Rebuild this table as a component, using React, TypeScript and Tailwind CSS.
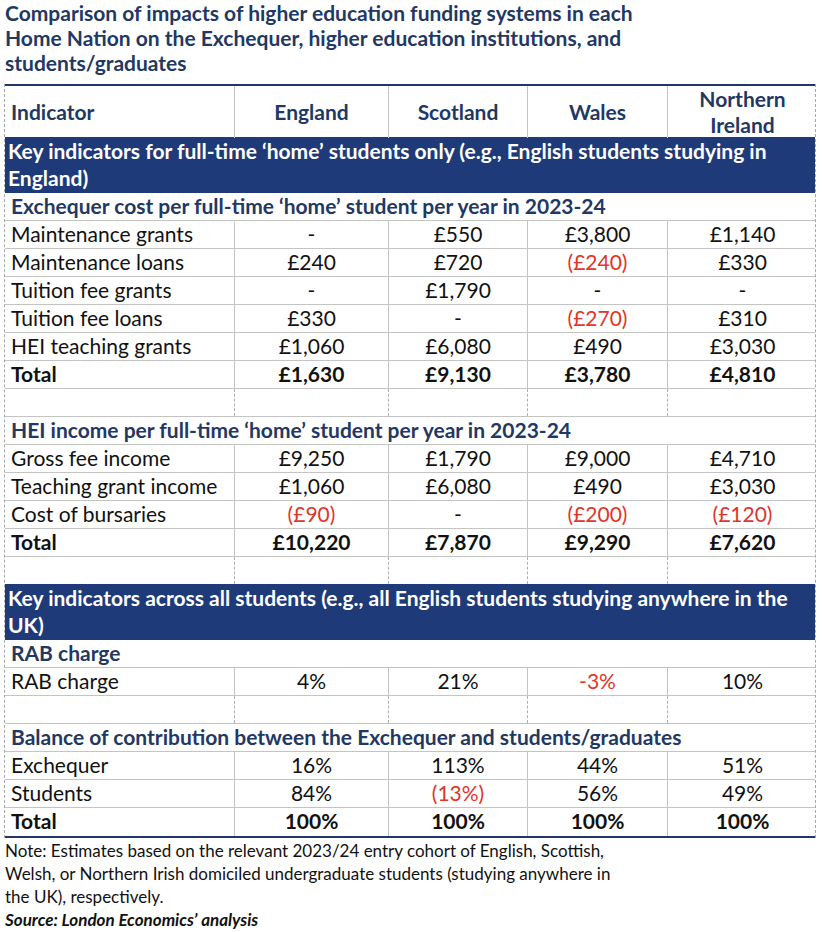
import React from "react";

type Row = { label: string; vals: string[]; bold?: boolean; red?: number[] };

const exchequer: Row[] = [
  { label: "Maintenance grants", vals: ["-", "£550", "£3,800", "£1,140"] },
  { label: "Maintenance loans", vals: ["£240", "£720", "(£240)", "£330"], red: [2] },
  { label: "Tuition fee grants", vals: ["-", "£1,790", "-", "-"] },
  { label: "Tuition fee loans", vals: ["£330", "-", "(£270)", "£310"], red: [2] },
  { label: "HEI teaching grants", vals: ["£1,060", "£6,080", "£490", "£3,030"] },
  { label: "Total", vals: ["£1,630", "£9,130", "£3,780", "£4,810"], bold: true },
];

const income: Row[] = [
  { label: "Gross fee income", vals: ["£9,250", "£1,790", "£9,000", "£4,710"] },
  { label: "Teaching grant income", vals: ["£1,060", "£6,080", "£490", "£3,030"] },
  { label: "Cost of bursaries", vals: ["(£90)", "-", "(£200)", "(£120)"], red: [0, 2, 3] },
  { label: "Total", vals: ["£10,220", "£7,870", "£9,290", "£7,620"], bold: true },
];

const balance: Row[] = [
  { label: "Exchequer", vals: ["16%", "113%", "44%", "51%"] },
  { label: "Students", vals: ["84%", "(13%)", "56%", "49%"], red: [1] },
];

const grid = "grid grid-cols-[229px_154px_139px_140px_150px]";

function DataRow({ row, last }: { row: Row; last?: boolean }) {
  return (
    <div className={`${grid} h-[28px] leading-[26px] ${last ? "" : "border-b border-[#c4c4c4]"}`}>
      <div className={`pl-[6px] whitespace-nowrap ${row.bold ? "font-bold" : ""}`}>{row.label}</div>
      {row.vals.map((v, i) => (
        <div
          key={i}
          className={`border-l border-[#c4c4c4] text-center ${row.bold ? "font-bold" : ""} ${
            row.red?.includes(i) ? "text-[#e0352b]" : ""
          }`}
        >
          {v}
        </div>
      ))}
    </div>
  );
}

function EmptyRow({ noLine }: { noLine?: boolean }) {
  return (
    <div className={`${grid} ${noLine ? "h-[27px]" : "h-[28px] border-b border-[#c4c4c4]"}`}>
      <div />
      <div className="border-l border-dashed border-[#b0b0b0]" />
      <div className="border-l border-dashed border-[#b0b0b0]" />
      <div className="border-l border-dashed border-[#b0b0b0]" />
      <div className="border-l border-dashed border-[#b0b0b0]" />
    </div>
  );
}

function SubHead({ children }: { children: React.ReactNode }) {
  return (
    <div className="h-[28px] border-b border-[#c4c4c4] pl-[6px] leading-[25px] font-bold text-[#1f3864]">
      {children}
    </div>
  );
}

function Band({ children }: { children: React.ReactNode }) {
  return (
    <div className="h-[56px] bg-[#1f3a78] text-white font-bold px-[3px] leading-[27px]">{children}</div>
  );
}

export default function App() {
  return (
    <div className="w-[822px] h-[932px] bg-white font-['Lato',sans-serif] text-[#111]">
      <h1 className="pl-[5px] font-bold text-[21px] leading-[25px] text-[#1f3864] w-[665px]">
        Comparison of impacts of higher education funding systems in each Home Nation on the Exchequer, higher
        education institutions, and students/graduates
      </h1>

      <div className="ml-[4px] mt-[9px] w-[812px] border-x border-dashed border-[#a8a8a8] text-[21px]">
        <div className={`${grid} h-[53px] border-t-2 border-[#1f3864] font-bold text-[#1f3864]`}>
          <div className="pl-[6px] flex items-center">Indicator</div>
          <div className="border-l border-[#c4c4c4] flex items-center justify-center">England</div>
          <div className="border-l border-[#c4c4c4] flex items-center justify-center">Scotland</div>
          <div className="border-l border-[#c4c4c4] flex items-center justify-center">Wales</div>
          <div className="border-l border-[#c4c4c4] flex items-center justify-center text-center leading-[26px]">
            Northern
            <br />
            Ireland
          </div>
        </div>

        <Band>Key indicators for full-time ‘home’ students only (e.g., English students studying in England)</Band>
        <SubHead>Exchequer cost per full-time ‘home’ student per year in 2023-24</SubHead>
        {exchequer.map((r) => (
          <DataRow key={r.label} row={r} />
        ))}
        <EmptyRow />

        <SubHead>HEI income per full-time ‘home’ student per year in 2023-24</SubHead>
        {income.map((r) => (
          <DataRow key={r.label} row={r} />
        ))}
        <EmptyRow noLine />

        <Band>Key indicators across all students (e.g., all English students studying anywhere in the UK)</Band>
        <SubHead>RAB charge</SubHead>
        <DataRow row={{ label: "RAB charge", vals: ["4%", "21%", "-3%", "10%"], red: [2] }} />
        <EmptyRow />

        <SubHead>Balance of contribution between the Exchequer and students/graduates</SubHead>
        {balance.map((r) => (
          <DataRow key={r.label} row={r} />
        ))}
        <div className="border-b-2 border-[#1f3864]">
          <DataRow row={{ label: "Total", vals: ["100%", "100%", "100%", "100%"], bold: true }} last />
        </div>
      </div>

      <div className="pl-[5px] pt-[1px] w-[625px] text-[17px] leading-[23px] text-[#111]">
        <p>
          Note: Estimates based on the relevant 2023/24 entry cohort of English, Scottish, Welsh, or Northern Irish
          domiciled undergraduate students (studying anywhere in the UK), respectively.
        </p>
        <p className="font-bold italic">Source: London Economics’ analysis</p>
      </div>
    </div>
  );
}
